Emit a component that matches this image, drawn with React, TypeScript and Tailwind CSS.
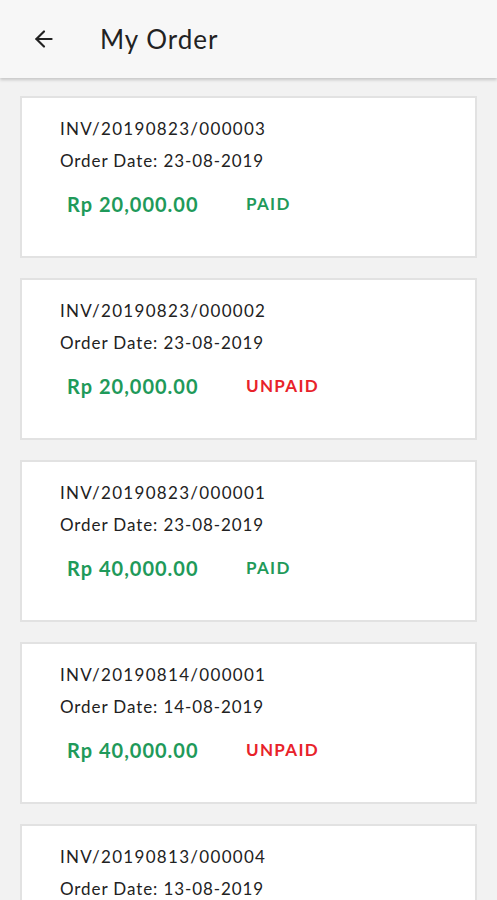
import { ArrowLeft } from 'lucide-react'

type Order = {
  invoice: string
  date: string
  amount: string
  paid: boolean
}

const orders: Order[] = [
  { invoice: 'INV/20190823/000003', date: '23-08-2019', amount: 'Rp 20,000.00', paid: true },
  { invoice: 'INV/20190823/000002', date: '23-08-2019', amount: 'Rp 20,000.00', paid: false },
  { invoice: 'INV/20190823/000001', date: '23-08-2019', amount: 'Rp 40,000.00', paid: true },
  { invoice: 'INV/20190814/000001', date: '14-08-2019', amount: 'Rp 40,000.00', paid: false },
  { invoice: 'INV/20190813/000004', date: '13-08-2019', amount: 'Rp 20,000.00', paid: true },
]

function OrderCard({ order }: { order: Order }) {
  return (
    <div className="h-[162px] shrink-0 border-2 border-[#e2e2e2] bg-white pl-[38px] pt-[18px]">
      <div className="text-[17px] leading-[26px] tracking-[1.3px] text-[#222]">{order.invoice}</div>
      <div className="mt-[6px] text-[17px] leading-[26px] tracking-[0.9px] text-[#222]">
        Order Date: {order.date}
      </div>
      <div className="mt-[17px] flex items-center pl-[7px]">
        <span className="w-[179px] text-[20px] font-bold leading-[26px] tracking-[1px] text-[#1f9a5a]">
          {order.amount}
        </span>
        <span
          className={`text-[17px] font-bold leading-[26px] tracking-[1.3px] ${
            order.paid ? 'text-[#1f9a5a]' : 'text-[#e8222a]'
          }`}
        >
          {order.paid ? 'PAID' : 'UNPAID'}
        </span>
      </div>
    </div>
  )
}

export default function App() {
  return (
    <div
      className="flex h-[900px] w-[497px] flex-col overflow-hidden bg-[#f2f2f2]"
      style={{ fontFamily: 'Lato, "Open Sans", sans-serif' }}
    >
      <header className="relative z-10 flex h-[78px] shrink-0 items-center bg-[#f7f7f7] shadow-[0_2px_3px_rgba(0,0,0,0.18)]">
        <ArrowLeft className="ml-[31px] h-[26px] w-[26px] text-[#222]" strokeWidth={2} />
        <h1 className="ml-[43px] text-[26px] leading-none tracking-[1px] text-[#222]">My Order</h1>
      </header>
      <main className="flex flex-col gap-[20px] px-[20px] pt-[18px]">
        {orders.map((o) => (
          <OrderCard key={o.invoice} order={o} />
        ))}
      </main>
    </div>
  )
}
